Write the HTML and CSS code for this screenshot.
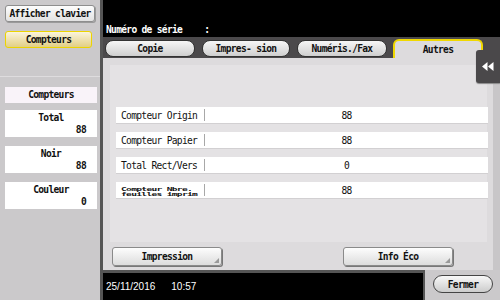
FILE: index.html
```html
<!DOCTYPE html>
<html lang="fr">
<head>
<meta charset="utf-8">
<title>Compteurs</title>
<link rel="stylesheet" href="styles.css">
</head>
<body>
<div class="screen">
  <aside class="side">
    <div class="side-top">
      <button class="btn-key">Afficher clavier</button>
      <button class="btn-yellow">Compteurs</button>
    </div>
    <div class="side-bottom">
      <div class="side-head">Compteurs</div>
      <div class="stat"><div class="stat-name">Total</div><div class="stat-val">88</div></div>
      <div class="stat"><div class="stat-name">Noir</div><div class="stat-val">88</div></div>
      <div class="stat"><div class="stat-name">Couleur</div><div class="stat-val">0</div></div>
    </div>
  </aside>
  <main class="main">
    <div class="header"><span class="serial">Numéro de série</span><span class="colon">:</span></div>
    <nav class="tabs">
      <div class="tab">Copie</div>
      <div class="tab">Impres- sion</div>
      <div class="tab">Numéris./Fax</div>
      <div class="tab tab-active">Autres</div>
    </nav>
    <section class="body">
      <div class="panel">
        <div class="row"><div class="label">Compteur Origin</div><div class="sep"></div><div class="value">88</div></div>
        <div class="row"><div class="label">Compteur Papier</div><div class="sep"></div><div class="value">88</div></div>
        <div class="row"><div class="label">Total Rect/Vers</div><div class="sep"></div><div class="value">0</div></div>
        <div class="row"><div class="label label-small"><span class="ln">Compteur Nbre.</span><span class="ln">feuilles imprim</span></div><div class="sep"></div><div class="value">88</div></div>
      </div>
      <div class="actions">
        <button class="btn-act">Impression</button>
        <button class="btn-act">Info Éco</button>
      </div>
    </section>
    <footer class="footer">
      <div class="clock"><span>25/11/2016</span><span class="time">10:57</span></div>
      <div class="close-area"><button class="btn-close">Fermer</button></div>
    </footer>
  </main>
  <div class="pull-tab">
    <svg width="12" height="9" viewBox="0 0 12 9"><path d="M0 4.5 L5.5 0 V9 Z M6 4.5 L11.5 0 V9 Z" fill="#fff"/></svg>
  </div>
</div>
</body>
</html>
```
FILE: styles.css
```css
* { box-sizing: border-box; }
html, body { margin: 0; padding: 0; }
body {
  width: 500px;
  height: 300px;
  overflow: hidden;
  background: #000;
  font-family: "DejaVu Sans Mono", "Liberation Mono", monospace;
  font-size: 9.6px;
  letter-spacing: -0.7px;
  color: #111;
}
button { font-family: inherit; letter-spacing: inherit; color: #111; padding: 0; cursor: pointer; }
.screen {
  position: relative;
  display: flex;
  width: 500px;
  height: 300px;
}
.side {
  width: 103px;
  flex: none;
  background: #cbc9cb;
  border-right: 3px solid #555;
  display: flex;
  flex-direction: column;
}
.side-top {
  height: 77px;
  border-bottom: 1px solid #dedcde;
  padding: 5px 0 0 5px;
  display: flex;
  flex-direction: column;
  gap: 9px;
}
.btn-key {
  width: 90px;
  height: 17px;
  border: 1px solid #8e8e8e;
  border-radius: 3px;
  background: linear-gradient(#fdfdfd, #e2e2e2);
  font-size: 9.6px;
  font-weight: bold;
  box-shadow: 1px 1px 0 #9a9a9a;
}
.btn-yellow {
  width: 87px;
  height: 17px;
  border: 1.5px solid #ecd400;
  border-radius: 3px;
  background: linear-gradient(#fbf4dc, #e2cf84);
  font-size: 9.6px;
  font-weight: bold;
}
.side-bottom {
  padding: 10px 0 0 5px;
  display: flex;
  flex-direction: column;
  gap: 7px;
}
.side-head {
  width: 92px;
  height: 16px;
  background: #f9f3f9;
  font-weight: bold;
  text-align: center;
  line-height: 16px;
}
.stat {
  width: 92px;
  height: 27px;
  background: #fff;
  padding: 2px 11px 0 8px;
  font-weight: bold;
  line-height: 12px;
  margin-bottom: 2px;
}
.stat-name { text-align: center; padding-left: 3px; }
.stat-val { text-align: right; }
.main {
  width: 397px;
  flex: none;
  display: flex;
  flex-direction: column;
}
.header {
  height: 37px;
  background: #000;
  color: #fff;
  font-weight: bold;
  display: flex;
  align-items: flex-end;
  padding: 0 0 2px 3px;
}
.colon { margin-left: 22px; }
.tabs {
  height: 21px;
  background: #4b494b;
  display: flex;
  align-items: flex-end;
  padding-left: 2px;
}
.tab {
  width: 90px;
  height: 17px;
  margin: 0 7px 1px 0;
  border: 1px solid #333;
  border-radius: 8px;
  background: linear-gradient(#f6f6f6, #cfcfcf);
  font-weight: bold;
  text-align: center;
  line-height: 15px;
}
.tab:nth-child(2) { width: 88px; }
.tab:nth-child(3) { width: 90px; margin-right: 6px; }
.tab-active {
  height: 19px;
  margin: 0;
  border: 2px solid #f0d800;
  border-bottom: none;
  border-radius: 6px 6px 0 0;
  background: #dddbdd;
  line-height: 18px;
}
.body {
  height: 212px;
  background: #dddbdd;
  border-right: 7px solid #c8c6c8;
  padding: 7px 6px 0 7px;
  display: flex;
  flex-direction: column;
}
.panel {
  height: 177px;
  background: #e4e2e4;
  padding: 42px 0 0 6px;
  display: flex;
  flex-direction: column;
  gap: 9px;
}
.row {
  height: 16px;
  margin-right: -1px;
  background: #fff;
  display: flex;
  align-items: center;
  box-shadow: 0 1px 0 #d2d0d2;
}
.label {
  width: 88px;
  padding-left: 5px;
  white-space: nowrap;
}
.label-small {
  display: flex;
  flex-direction: column;
  gap: 0;
  font-weight: bold;
}
.ln {
  display: block;
  height: 5px;
  line-height: 9px;
  overflow: visible;
  transform: scaleY(0.55);
  transform-origin: left 60%;
}
.sep {
  width: 1px;
  height: 12px;
  background: #a8a8a8;
}
.value {
  flex: 1;
  text-align: center;
}
.actions {
  display: flex;
  gap: 121px;
  margin-top: 5px;
  padding-left: 2px;
}
.btn-act {
  position: relative;
  width: 110px;
  height: 19px;
  border: 1px solid #8a8a8a;
  border-radius: 3px;
  background: linear-gradient(#fdfdfd, #dcdcdc);
  font-size: 9.6px;
  font-weight: bold;
  box-shadow: 1px 1px 0 #777;
}
.btn-act::after {
  content: "";
  position: absolute;
  right: 2px;
  bottom: 2px;
  border-left: 5px solid transparent;
  border-bottom: 5px solid #9a9a9a;
}
.footer {
  flex: 1;
  display: flex;
}
.clock {
  flex: 1;
  background: #000;
  border-top: 3px solid #555;
  color: #fff;
  font-family: "Liberation Sans", Arial, sans-serif;
  font-size: 10px;
  letter-spacing: 0;
  padding: 8px 0 0 3px;
}
.time { margin-left: 16px; }
.close-area {
  width: 77px;
  background: #cbc9cb;
  border-left: 2px solid #555;
  padding: 5px 0 0 8px;
}
.btn-close {
  width: 60px;
  height: 18px;
  border: 1px solid #444;
  border-radius: 9px;
  background: linear-gradient(#f8f8f8, #cccccc);
  font-size: 9.6px;
  font-weight: bold;
}
.pull-tab {
  position: absolute;
  left: 476px;
  top: 50px;
  width: 24px;
  height: 33px;
  background: #4a484a;
  border-radius: 3px 0 0 3px;
  box-shadow: 0 1px 1px #888;
  display: flex;
  align-items: center;
  justify-content: center;
}
```
